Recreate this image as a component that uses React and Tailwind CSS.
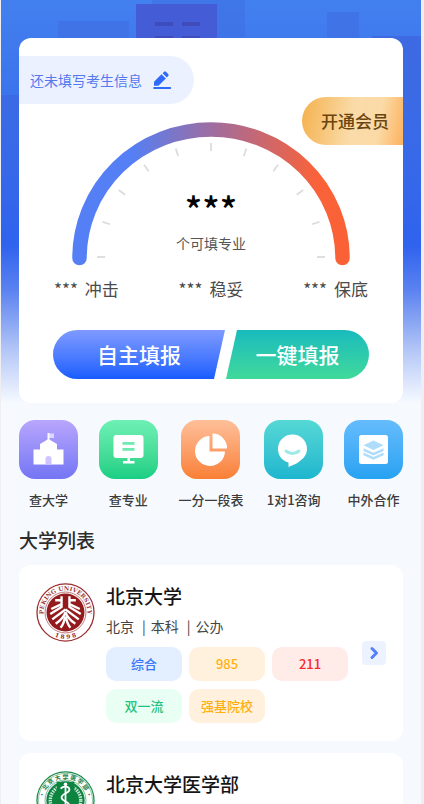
import React from "react";

const ticks = Array.from({ length: 11 }, (_, i) => {
  const a = (Math.PI * i) / 10;
  return {
    x1: 139 - Math.cos(a) * 106,
    y1: 135 - Math.sin(a) * 106,
    x2: 139 - Math.cos(a) * 114,
    y2: 135 - Math.sin(a) * 114,
  };
});

function Gauge() {
  return (
    <svg viewBox="0 0 278 144" className="block w-[278px]" aria-hidden="true">
      <defs>
        <linearGradient id="arc" x1="0" y1="0" x2="1" y2="0">
          <stop offset="0" stopColor="#5580f5" />
          <stop offset="0.2" stopColor="#557ff4" />
          <stop offset="0.52" stopColor="#a26c9b" />
          <stop offset="0.9" stopColor="#f9623a" />
          <stop offset="1" stopColor="#fb6136" />
        </linearGradient>
      </defs>
      <path
        d="M7.5 136 A131.5 128.5 0 0 1 270.5 136"
        fill="none"
        stroke="url(#arc)"
        strokeWidth="14.5"
        strokeLinecap="round"
      />
      {ticks.map((t, i) => (
        <line key={i} {...t} stroke="#dcdcdf" strokeWidth="1.8" />
      ))}
    </svg>
  );
}

function Skyline() {
  return (
    <svg
      className="absolute inset-x-0 top-0 h-[245px] w-full"
      viewBox="0 0 420 245"
      preserveAspectRatio="none"
      aria-hidden="true"
    >
      <defs>
        <linearGradient id="fade" x1="0" y1="36" x2="0" y2="245" gradientUnits="userSpaceOnUse">
          <stop offset="0" stopColor="#3d62dd" stopOpacity="0.7" />
          <stop offset="1" stopColor="#3a5fdd" stopOpacity="0" />
        </linearGradient>
      </defs>
      <rect x="57" y="21" width="71" height="60" fill="#3e6fe2" opacity=".7" />
      <rect x="151" y="0" width="93" height="60" fill="#3e70e2" opacity=".6" />
      <rect x="135" y="4" width="81" height="60" fill="#445cd5" />
      <path d="M154 22h18v4h-18zM181 22h18v4h-18zM154 36h18v4h-18zM181 36h18v4h-18z" fill="#3f4cbb" />
      <rect x="326" y="12" width="32" height="60" fill="#3e6fe2" opacity=".7" />
      <rect x="371" y="36" width="49" height="209" fill="url(#fade)" />
      <rect x="0" y="95" width="100" height="150" fill="url(#fade)" />
    </svg>
  );
}

const icons = {
  school: (
    <>
      <path d="M28.500 13h2v7h-2z" fill="#fff" opacity=".95" />
      <path d="M30 13.500h5v4.500h-5z" fill="#fff" opacity=".6" />
      <path d="M29.500 19l8.500 5v5.500h6.500v15h-30v-15H21V24z" fill="#fff" />
      <path d="M26.500 44.500v-5.500a3 3 0 0 1 6 0v5.500z" fill="#cfc4ff" />
    </>
  ),
  board: (
    <>
      <rect x="14.500" y="15" width="30" height="23" rx="3" fill="#fff" />
      <path d="M28.500 38h2.500v3h4.500v2.500H24V41h4.500z" fill="#fff" />
      <path d="M23.500 22h12v2.800h-12zM23.500 28h12v2.800h-12z" fill="#6feab1" />
    </>
  ),
  pie: (
    <>
      <path d="M28.500 16v15.500H44A15 15 0 1 1 28.500 16z" fill="#fff" />
      <path d="M31.500 13.500a14.500 14.500 0 0 1 14.500 15H31.500z" fill="#fff" />
    </>
  ),
  chat: (
    <>
      <path d="M28.500 14.500c8.300 0 14.500 6.300 14.500 14.300 0 7.400-5.500 11.500-10.500 14.700L24.500 47v-4.500c-6.500-1.500-10.500-7-10.500-13.700 0-8 6.200-14.300 14.500-14.300z" fill="#fff" />
      <path d="M22 31c3.800 3.300 9.200 3.300 13 0" fill="none" stroke="#9eeae6" strokeWidth="3" strokeLinecap="round" />
    </>
  ),
  layers: (
    <>
      <rect x="15" y="15" width="29" height="29" rx="2.500" fill="#fff" />
      <path d="M29.500 20.500l10 4.700-10 4.700-10-4.700z" fill="#aedcfb" />
      <path d="M19.500 28.200l10 4.500 10-4.500v2.800l-10 4.500-10-4.500z" fill="#aedcfb" />
      <path d="M19.500 32.500l10 4.500 10-4.500v2.800l-10 4.500-10-4.500z" fill="#aedcfb" />
    </>
  ),
};

const menu = [
  { label: "查大学", icon: "school", bg: "from-[#b9a5fd] to-[#7475f4]" },
  { label: "查专业", icon: "board", bg: "from-[#6df0b5] to-[#16cf83]" },
  { label: "一分一段表", icon: "pie", bg: "from-[#fdbf98] to-[#f97f33]" },
  { label: "1对1咨询", icon: "chat", bg: "from-[#55d8d5] to-[#1cb6cf]" },
  { label: "中外合作", icon: "layers", bg: "from-[#64bcfd] to-[#25a2f2]" },
];

function PekingLogo() {
  return (
    <svg viewBox="0 0 60 60" className="size-[59px] shrink-0" role="img" aria-label="北京大学校徽">
      <defs>
        <path id="pkTop" d="M14.200 45.800 A22.400 22.400 0 1 1 45.800 45.800" />
        <path id="pkBottom" d="M14 51.600 A27 27 0 0 0 46 51.600" />
      </defs>
      <circle cx="30" cy="30" r="29" fill="#fff" stroke="#9c2c2f" strokeWidth="1.300" />
      <circle cx="30" cy="30" r="20.800" fill="none" stroke="#a33a3c" strokeWidth=".7" />
      <circle cx="30" cy="30" r="19.300" fill="#931b1e" />
      <text fontFamily="DejaVu Serif, serif" fontSize="6" fontWeight="700" fill="#a03a3d">
        <textPath href="#pkTop" startOffset="50%" textAnchor="middle">PEKING UNIVERSITY</textPath>
      </text>
      <text fontFamily="DejaVu Serif, serif" fontSize="6" fontWeight="700" fill="#96282b">
        <textPath href="#pkBottom" startOffset="50%" textAnchor="middle">1 8 9 8</textPath>
      </text>
      <g fill="none" stroke="#fff" strokeWidth="2.400" strokeLinejoin="round">
        <path d="M26 13.500V24.500L14.500 31.500M26 17.500H19.500M26 21.500L15.500 26.500" />
        <path d="M34 13.500V24.500L45.500 31.500M34 17.500H40.500M34 21.500L44.500 26.500" />
        <path d="M30 27L16.500 37M30 27L43.500 37" />
        <path d="M30 30C28 35 24.500 38.500 20 41.500M30 30C32 35 35.500 38.500 40 41.500" />
        <path d="M29.500 34C29 39 27.500 42.500 25 45.500M30.500 34C31 39 32.500 42.500 35 45.500" />
      </g>
    </svg>
  );
}

function MedicalLogo() {
  return (
    <svg viewBox="0 0 60 60" className="size-[59px] shrink-0" role="img" aria-label="北京大学医学部校徽">
      <defs>
        <path id="mdTop" d="M14 46 A22.500 22.500 0 1 1 46 46" />
      </defs>
      <circle cx="30" cy="30" r="29" fill="#fff" stroke="#1b8a49" strokeWidth="1.300" />
      <circle cx="30" cy="30" r="27.500" fill="none" stroke="#1b8a49" strokeWidth=".5" />
      <circle cx="30" cy="30" r="20.800" fill="none" stroke="#1b8a49" strokeWidth=".6" />
      <circle cx="30" cy="30" r="19.500" fill="#0c8440" />
      <text fontFamily="Noto Sans CJK SC, sans-serif" fontSize="6" fontWeight="700" fill="#157c43">
        <textPath href="#mdTop" startOffset="50%" textAnchor="middle">· 北 京 大 学 医 学 部 ·</textPath>
      </text>
      <circle cx="30" cy="30" r="15.500" fill="none" stroke="#fff" strokeWidth="3.500" strokeDasharray="1.500 1" opacity=".8" />
      <path d="M21 11h18v9H21z" fill="#0c8440" />
      <path d="M30 13v34" stroke="#fff" strokeWidth="1.800" />
      <path d="M25 18c3-3.500 9-2.500 9 1s-8 4-8 8 8 4 8 8-7 3.500-7 7" fill="none" stroke="#fff" strokeWidth="1.800" />
      <circle cx="30" cy="13.500" r="1.800" fill="#fff" />
    </svg>
  );
}

const tagColors = {
  blue: "bg-[#e3efff] text-[#3a78f7]",
  amber: "bg-[#fff1de] text-[#ffb010]",
  red: "bg-[#ffebe8] text-[#f92a2e]",
  green: "bg-[#eafff3] text-[#1ec283]",
};

const schools = [
  {
    name: "北京大学",
    logo: <PekingLogo />,
    facts: ["北京", "本科", "公办"],
    tags: [
      ["综合", "blue"],
      ["985", "amber"],
      ["211", "red"],
      ["双一流", "green"],
      ["强基院校", "amber"],
    ],
  },
  { name: "北京大学医学部", logo: <MedicalLogo />, facts: [], tags: [] },
];

function SchoolCard({ logo, name, facts, tags }) {
  return (
    <li className="flex min-h-[176px] items-start rounded-xl bg-white py-[18px] pr-[17px] pl-[17px]">
      {logo}
      <div className="ml-[11px] flex-1">
        <h3 className="text-[19px] leading-[26px] font-medium text-[#151515]">{name}</h3>
        {facts.length > 0 && (
          <p className="mt-1.5 flex gap-2 text-sm leading-[22px] text-[#444]">
            {facts.map((fact, i) => (
              <span key={fact} className={i > 0 ? "flex gap-[5px]" : undefined}>
                {i > 0 && <span>|</span>}
                {fact}
              </span>
            ))}
          </p>
        )}
        {tags.length > 0 && (
          <ul className="mt-2.5 flex max-w-[242px] flex-wrap gap-x-[7px] gap-y-2">
            {tags.map(([text, color]) => (
              <li
                key={text}
                className={`flex h-[34px] w-[76px] items-center justify-center rounded-[10px] text-[13px] font-medium ${tagColors[color]}`}
              >
                {text}
              </li>
            ))}
          </ul>
        )}
      </div>
      <button
        type="button"
        aria-label={`查看${name}`}
        className="flex size-6 items-center justify-center self-center rounded-sm bg-[#ecf2ff]"
      >
        <svg viewBox="0 0 24 24" className="size-6" fill="none" stroke="#5580fa" strokeWidth="3" strokeLinecap="round" strokeLinejoin="round">
          <path d="M10 7.500l4.500 4.500-4.500 4.500" />
        </svg>
      </button>
    </li>
  );
}

export default function App() {
  return (
    <div className="h-screen overflow-y-auto bg-[#efeff1] pr-[3px] pl-px font-['Noto_Sans_CJK_SC',sans-serif] [scrollbar-width:none]">
      <main className="relative min-h-full bg-[#f6faff] bg-[linear-gradient(#4380ef_0px,#3c74ec_90px,#2f62ee_245px,#5b82f0_290px,#b3c6f7_350px,#f6faff_403px)] bg-no-repeat px-[18px] pt-[38px] pb-3">
        <Skyline />
        <section className="relative rounded-xl bg-white pt-[18px] pb-6">
          <button
            type="button"
            className="flex h-12 w-[175px] items-center gap-2.5 rounded-r-full bg-[#ecf1ff] pl-[11px] text-sm text-[#5479ee]"
          >
            还未填写考生信息
            <svg viewBox="0 0 20 20" className="size-5" fill="#2f6bf8" aria-hidden="true">
              <path d="M2 15.800V11.800L9.500 4.300l4.300 4.200-7.300 7.300z" />
              <path d="M10.600 3.300l1.500-1.500q.9-.9 1.800 0l2.300 2.300q.9.900 0 1.800l-1.400 1.500z" />
              <rect x="1.200" y="16.900" width="18" height="2" rx="1" />
            </svg>
          </button>
          <button
            type="button"
            className="absolute top-[59px] right-0 h-[48px] w-[101px] rounded-l-full bg-[linear-gradient(100deg,#f5b556_5%,#fadcaa_50%,#fbdaa6_75%,#fcb564_98%)] pl-[5px] text-[17px] font-medium text-[#6b4510]"
          >
            开通会员
          </button>

          <div className="mt-[18px] grid justify-items-center">
            <div className="col-start-1 row-start-1">
              <Gauge />
            </div>
            <div className="col-start-1 row-start-1 flex flex-col items-center justify-end pb-3 text-center">
              <strong className="text-[36px] leading-[44px] font-medium text-black">***</strong>
              <span className="mt-0.5 text-sm leading-[22px] text-[#555]">个可填专业</span>
            </div>
          </div>

          <div className="mt-2.5 flex justify-between px-[35px] text-[17px] leading-[26px] text-[#4a4a4a]">
            {["冲击", "稳妥", "保底"].map((level) => (
              <span key={level} className="flex gap-[7px]">
                <span>***</span>
                {level}
              </span>
            ))}
          </div>

          <div className="mt-[28px] flex gap-px px-[34px] text-[21px] font-medium text-white">
            <button
              type="button"
              className="h-[49px] flex-[172] rounded-l-full bg-linear-to-b from-[#7f9aff] to-[#175cff] [clip-path:polygon(0_0,100%_0,calc(100%-11px)_100%,0_100%)]"
            >
              自主填报
            </button>
            <button
              type="button"
              className="h-[49px] flex-[143] rounded-r-full bg-linear-to-b from-[#18bbbd] to-[#40d99a] [clip-path:polygon(11px_0,100%_0,100%_100%,0_100%)]"
            >
              一键填报
            </button>
          </div>
        </section>

        <nav className="relative mt-[17px] flex justify-between">
          {menu.map((m) => (
            <a key={m.label} href="#" className="flex min-w-[58px] flex-col items-center">
              <span className={`size-[59px] rounded-2xl bg-linear-to-b ${m.bg}`}>
                <svg viewBox="0 0 59 59" className="size-full" aria-hidden="true">
                  {icons[m.icon]}
                </svg>
              </span>
              <span className="mt-[11px] text-[13px] leading-5 font-medium text-[#3c3c3c]">{m.label}</span>
            </a>
          ))}
        </nav>

        <h2 className="mt-[17px] text-[19px] leading-[26px] font-medium text-[#2d2d2d]">大学列表</h2>
        <ul className="mt-3 flex flex-col gap-3">
          {schools.map((school) => (
            <SchoolCard key={school.name} {...school} />
          ))}
        </ul>
      </main>
    </div>
  );
}
